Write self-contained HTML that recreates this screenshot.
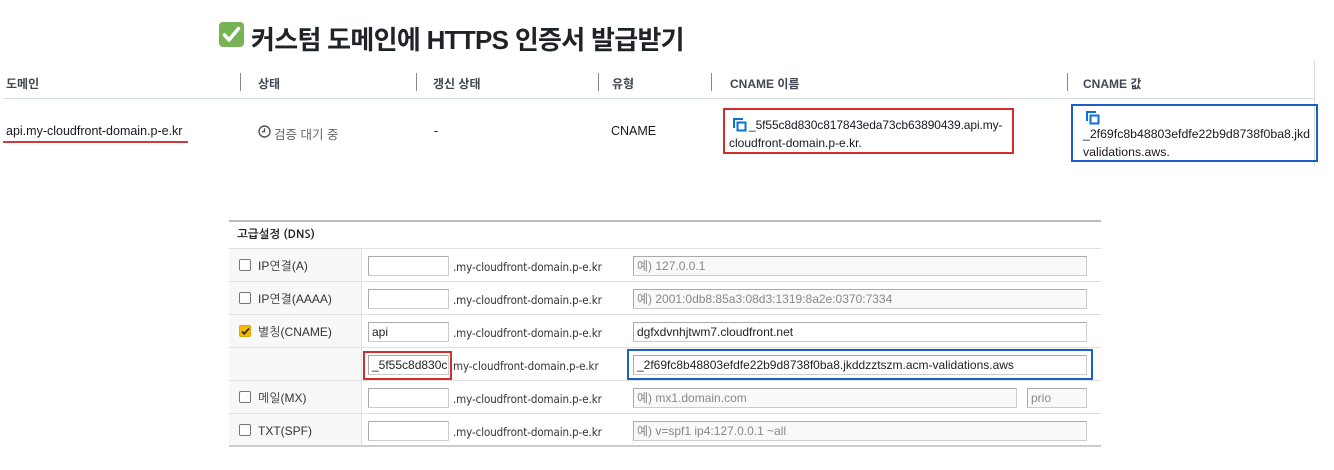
<!DOCTYPE html>
<html><head><meta charset="utf-8"><style>
*{margin:0;padding:0;box-sizing:border-box}
body{width:1334px;height:470px;background:#fff;position:relative;overflow:hidden;font-family:"Liberation Sans","Noto Sans CJK KR",sans-serif;color:#16191f}
.a{position:absolute;white-space:nowrap}
.h{font-size:12px;font-weight:bold;color:#414750;top:75px}
.sep{position:absolute;top:73px;width:1px;height:18px;background:#888}
.d{font-size:12.5px;top:124px}
.row{position:absolute;left:229px;width:872px;height:33px;border-bottom:1px solid #e0e0e0}
.lab{position:absolute;left:0;top:0;width:133px;height:100%;background:#f8f8f8;border-right:1px solid #e2e2e2;font-family:"Liberation Sans","NanumGothic",sans-serif;font-size:12px;color:#333;padding:10px 0 0 29px}
.cb{position:absolute;left:10px;top:10px;width:12px;height:12px;border:1px solid #777;border-radius:2px;background:#fff}
.in{position:absolute;height:20px;border:1px solid #ccc;border-top-color:#aaa;border-left-color:#aaa;background:#fff;font-size:12px;line-height:16px;padding:1px 3px;color:#222}
.in1{left:139px;top:7px;width:81px}
.in2{left:404px;top:7px;width:454px}
.ph{color:#888;background:#f9f9f9}
.dm{position:absolute;left:224px;top:11px;font-size:11.5px;color:#333;font-family:"DejaVu Sans Condensed","DejaVu Sans",sans-serif;letter-spacing:-0.1px}
</style></head><body>
<svg class="a" style="left:219px;top:22px" width="25" height="25" viewBox="0 0 25 25"><rect width="25" height="25" rx="4" fill="#77b255"/><path d="M5.5 13l4.5 5 9.5-11.5" stroke="#fff" stroke-width="3.5" fill="none" stroke-linecap="round" stroke-linejoin="round"/></svg>
<div class="a" style="left:251px;top:20px;font-size:26px;font-weight:bold;color:#1f2328;letter-spacing:-0.7px">커스텀 도메인에 HTTPS 인증서 발급받기</div>

<div class="a h" style="left:6px">도메인</div>
<div class="sep" style="left:240px"></div><div class="a h" style="left:258px">상태</div>
<div class="sep" style="left:416px"></div><div class="a h" style="left:433px">갱신 상태</div>
<div class="sep" style="left:598px"></div><div class="a h" style="left:612px">유형</div>
<div class="sep" style="left:711px"></div><div class="a h" style="left:730px">CNAME 이름</div>
<div class="sep" style="left:1067px"></div><div class="a h" style="left:1083px">CNAME 값</div>
<div class="a" style="left:4px;top:98px;width:1310px;height:1px;background:#d5dbdb"></div>
<div class="a" style="left:1314px;top:60px;width:1px;height:106px;background:#d5dbdb"></div>

<div class="a d" style="left:6px">api.my-cloudfront-domain.p-e.kr</div>
<div class="a" style="left:3px;top:141px;width:185px;height:2px;background:#d13b3b"></div>
<svg class="a" style="left:258px;top:125px" width="13" height="13" viewBox="0 0 13 13"><circle cx="6.5" cy="6.5" r="5.5" stroke="#555" stroke-width="1.4" fill="none"/><path d="M6.5 3.3v3.4H4" stroke="#555" stroke-width="1.4" fill="none"/></svg>
<div class="a d" style="left:274px;color:#666">검증 대기 중</div>
<div class="a d" style="left:434px">-</div>
<div class="a d" style="left:611px">CNAME</div>

<div class="a" style="left:723px;top:108px;width:291px;height:46px;border:2px solid #d12d2d"></div>
<svg class="a" style="left:733px;top:118px" width="14" height="14" viewBox="0 0 14 14"><path d="M1 10V1h9" stroke="#0972d3" stroke-width="2" fill="none"/><rect x="4.5" y="4.5" width="8" height="8" stroke="#0972d3" stroke-width="2" fill="none"/></svg>
<div class="a" style="left:749px;top:116px;font-size:12px;line-height:19px;letter-spacing:-0.1px">_5f55c8d830c817843eda73cb63890439.api.my-</div>
<div class="a" style="left:729px;top:134px;font-size:12px;line-height:19px">cloudfront-domain.p-e.kr.</div>

<div class="a" style="left:1071px;top:104px;width:247px;height:58px;border:2px solid #1a5fc8"></div>
<svg class="a" style="left:1086px;top:111px" width="14" height="14" viewBox="0 0 14 14"><path d="M1 10V1h9" stroke="#0972d3" stroke-width="2" fill="none"/><rect x="4.5" y="4.5" width="8" height="8" stroke="#0972d3" stroke-width="2" fill="none"/></svg>
<div class="a" style="left:1083px;top:125px;font-size:12.3px;line-height:19px">_2f69fc8b48803efdfe22b9d8738f0ba8.jkd</div>
<div class="a" style="left:1083px;top:143px;font-size:12.3px;line-height:19px">validations.aws.</div>

<div class="a" style="left:229px;top:220px;width:872px;height:2px;background:#bbb"></div>
<div class="a" style="left:237px;top:228px;font-size:11.5px;font-weight:bold;color:#222;font-family:'NanumGothic','Liberation Sans',sans-serif">고급설정 (DNS)</div>
<div class="a" style="left:229px;top:248px;width:872px;height:1px;background:#e0e0e0"></div>

<div class="row" style="top:249px"><div class="lab"><span class="cb"></span>IP연결(A)</div><div class="in in1"></div><div class="dm">.my-cloudfront-domain.p-e.kr</div><div class="in in2 ph">예) 127.0.0.1</div></div>
<div class="row" style="top:282px"><div class="lab"><span class="cb"></span>IP연결(AAAA)</div><div class="in in1"></div><div class="dm">.my-cloudfront-domain.p-e.kr</div><div class="in in2 ph">예) 2001:0db8:85a3:08d3:1319:8a2e:0370:7334</div></div>
<div class="row" style="top:315px"><div class="lab"><span class="cb" style="background:#f5b800;border-color:#e0a800"><svg style="position:absolute;left:1px;top:1px" width="9" height="9" viewBox="0 0 9 9"><path d="M1 4.5l2.3 2.3L8 1.5" stroke="#222" stroke-width="1.6" fill="none"/></svg></span>별칭(CNAME)</div><div class="in in1">api</div><div class="dm">.my-cloudfront-domain.p-e.kr</div><div class="in in2">dgfxdvnhjtwm7.cloudfront.net</div></div>
<div class="row" style="top:348px"><div class="lab" style="padding:0"></div><div class="in in1" style="overflow:hidden">_5f55c8d830c</div><div class="dm">my-cloudfront-domain.p-e.kr</div><div class="in in2">_2f69fc8b48803efdfe22b9d8738f0ba8.jkddzztszm.acm-validations.aws</div></div>
<div class="row" style="top:381px"><div class="lab"><span class="cb"></span>메일(MX)</div><div class="in in1"></div><div class="dm">.my-cloudfront-domain.p-e.kr</div><div class="in in2 ph" style="width:384px">예) mx1.domain.com</div><div class="in ph" style="left:798px;top:7px;width:60px">prio</div></div>
<div class="row" style="top:414px;border-bottom:2px solid #ccc"><div class="lab"><span class="cb"></span>TXT(SPF)</div><div class="in in1"></div><div class="dm">.my-cloudfront-domain.p-e.kr</div><div class="in in2 ph">예) v=spf1 ip4:127.0.0.1 ~all</div></div>

<div class="a" style="left:363px;top:351px;width:89px;height:29px;border:2px solid #d12d2d"></div>
<div class="a" style="left:627px;top:349px;width:466px;height:31px;border:2px solid #1a5fc8"></div>
</body></html>
